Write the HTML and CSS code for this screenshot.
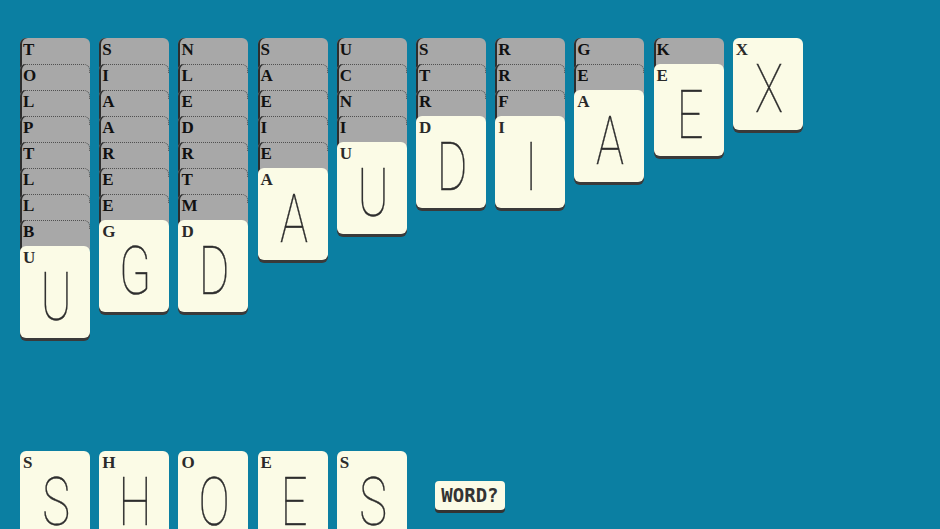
FILE: index.html
```html
<!DOCTYPE html>
<html>
<head>
<meta charset="utf-8">
<link rel="stylesheet" href="styles.css">
</head>
<body>
<div class="table">
  <div class="tableau">
    <div class="pile">
      <div class="card down"><span class="idx">T</span></div>
      <div class="card down"><span class="idx">O</span></div>
      <div class="card down"><span class="idx">L</span></div>
      <div class="card down"><span class="idx">P</span></div>
      <div class="card down"><span class="idx">T</span></div>
      <div class="card down"><span class="idx">L</span></div>
      <div class="card down"><span class="idx">L</span></div>
      <div class="card down"><span class="idx">B</span></div>
      <div class="card up"><span class="idx">U</span><span class="big">U</span></div>
    </div>
    <div class="pile">
      <div class="card down"><span class="idx">S</span></div>
      <div class="card down"><span class="idx">I</span></div>
      <div class="card down"><span class="idx">A</span></div>
      <div class="card down"><span class="idx">A</span></div>
      <div class="card down"><span class="idx">R</span></div>
      <div class="card down"><span class="idx">E</span></div>
      <div class="card down"><span class="idx">E</span></div>
      <div class="card up"><span class="idx">G</span><span class="big">G</span></div>
    </div>
    <div class="pile">
      <div class="card down"><span class="idx">N</span></div>
      <div class="card down"><span class="idx">L</span></div>
      <div class="card down"><span class="idx">E</span></div>
      <div class="card down"><span class="idx">D</span></div>
      <div class="card down"><span class="idx">R</span></div>
      <div class="card down"><span class="idx">T</span></div>
      <div class="card down"><span class="idx">M</span></div>
      <div class="card up"><span class="idx">D</span><span class="big">D</span></div>
    </div>
    <div class="pile">
      <div class="card down"><span class="idx">S</span></div>
      <div class="card down"><span class="idx">A</span></div>
      <div class="card down"><span class="idx">E</span></div>
      <div class="card down"><span class="idx">I</span></div>
      <div class="card down"><span class="idx">E</span></div>
      <div class="card up"><span class="idx">A</span><span class="big">A</span></div>
    </div>
    <div class="pile">
      <div class="card down"><span class="idx">U</span></div>
      <div class="card down"><span class="idx">C</span></div>
      <div class="card down"><span class="idx">N</span></div>
      <div class="card down"><span class="idx">I</span></div>
      <div class="card up"><span class="idx">U</span><span class="big">U</span></div>
    </div>
    <div class="pile">
      <div class="card down"><span class="idx">S</span></div>
      <div class="card down"><span class="idx">T</span></div>
      <div class="card down"><span class="idx">R</span></div>
      <div class="card up"><span class="idx">D</span><span class="big">D</span></div>
    </div>
    <div class="pile">
      <div class="card down"><span class="idx">R</span></div>
      <div class="card down"><span class="idx">R</span></div>
      <div class="card down"><span class="idx">F</span></div>
      <div class="card up"><span class="idx">I</span><span class="big">I</span></div>
    </div>
    <div class="pile">
      <div class="card down"><span class="idx">G</span></div>
      <div class="card down"><span class="idx">E</span></div>
      <div class="card up"><span class="idx">A</span><span class="big">A</span></div>
    </div>
    <div class="pile">
      <div class="card down"><span class="idx">K</span></div>
      <div class="card up"><span class="idx">E</span><span class="big">E</span></div>
    </div>
    <div class="pile">
      <div class="card up"><span class="idx">X</span><span class="big">X</span></div>
    </div>
  </div>
  <div class="word-row">
    <div class="card up"><span class="idx">S</span><span class="big">S</span></div>
    <div class="card up"><span class="idx">H</span><span class="big">H</span></div>
    <div class="card up"><span class="idx">O</span><span class="big">O</span></div>
    <div class="card up"><span class="idx">E</span><span class="big">E</span></div>
    <div class="card up"><span class="idx">S</span><span class="big">S</span></div>
    <button class="word-btn">WORD?</button>
  </div>
</div>
</body>
</html>
```
FILE: styles.css
```css
html, body {
  margin: 0;
  padding: 0;
}
body {
  background: #0b7fa2;
  width: 940px;
  height: 529px;
  overflow: hidden;
}
.table {
  padding: 38px 0 0 20px;
}
.tableau {
  display: flex;
  gap: 9.2px;
  align-items: flex-start;
  height: 413px;
}
.pile {
  display: flex;
  flex-direction: column;
  width: 70px;
}
.card {
  position: relative;
  box-sizing: border-box;
  width: 70px;
  border-radius: 6px;
  display: flex;
  flex-direction: column;
  flex-shrink: 0;
}
.down {
  height: 34px;
  margin-bottom: -8px;
  background: #a8a8a8;
  box-shadow: inset 2px 0 0 #2e2e2e;
}
.down + .down::before {
  content: "";
  position: absolute;
  left: 3px;
  right: 0;
  top: 0;
  height: 8px;
  border-top: 1px dotted #505050;
  border-right: 1px dotted #505050;
  border-top-right-radius: 6px;
}
.up {
  height: 92px;
  background: #fbfbe6;
  box-shadow: 0 3px 0 #3a3a3a;
}
.idx {
  display: block;
  height: 18px;
  padding: 3px 0 0 3px;
  box-sizing: border-box;
  font-family: "Liberation Serif", serif;
  font-weight: bold;
  font-size: 17px;
  line-height: 17px;
  color: #111111;
}
.up .idx {
  color: #2a2a2a;
}
.big {
  display: block;
  height: 67px;
  font-family: Roboto, "DejaVu Sans", sans-serif;
  font-weight: 100;
  font-size: 67px;
  line-height: 67px;
  text-align: center;
  color: #2e2e2e;
  -webkit-text-stroke: 0.35px #2e2e2e;
  padding-left: 3px;
  transform: scaleX(0.7);
}
.word-row {
  display: flex;
  gap: 9.2px;
  align-items: flex-start;
}
.word-btn {
  margin: 30px 0 0 19px;
  width: 70px;
  height: 29px;
  padding: 0;
  border: none;
  border-radius: 4px;
  background: #fbfbe6;
  box-shadow: 0 3px 0 #333333;
  font-family: "DejaVu Sans Mono", monospace;
  font-weight: bold;
  font-size: 19px;
  line-height: 29px;
  color: #333333;
  text-align: center;
}
```
